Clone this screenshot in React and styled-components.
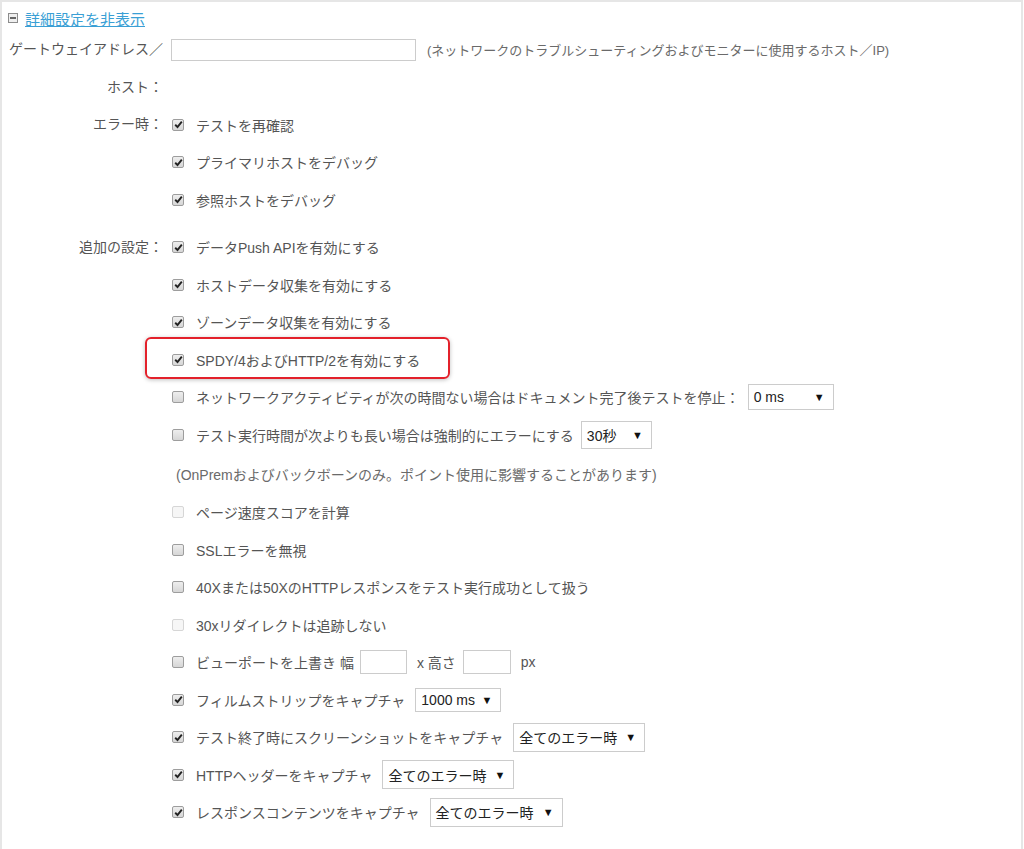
import styled, { createGlobalStyle } from "styled-components";

const GlobalStyle = createGlobalStyle`
  body {
    margin: 0;
    background: #fff;
    font-family: "Liberation Sans", "Noto Sans CJK JP", sans-serif;
  }
`;

const Panel = styled.div`
  box-sizing: border-box;
  width: 1023px;
  min-height: 870px;
  border: 2px solid #e6e6e6;
  border-bottom: none;
  padding: 0 0 0 4px;
`;

const Header = styled.div`
  display: flex;
  align-items: center;
  height: 29px;
  padding: 3px 0 0 2px;
  box-sizing: border-box;
  gap: 7px;
`;

const ToggleIcon = styled.span`
  box-sizing: border-box;
  width: 10px;
  height: 10px;
  border: 1px solid #8c8c8c;
  background: #efefef;
  position: relative;

  &::after {
    content: "";
    position: absolute;
    left: 1px;
    right: 1px;
    top: 3px;
    height: 2px;
    background: #666;
  }
`;

const ToggleLink = styled.a`
  font-size: 15px;
  color: #3a9fd5;
  text-decoration: underline;
  cursor: pointer;
`;

const Group = styled.div`
  display: flex;
  margin-top: ${(p) => (p.$gap ? "10px" : "0")};
`;

const Label = styled.div`
  flex: none;
  width: 157px;
  height: 37.5px;
  line-height: 37.5px;
  text-align: right;
  font-size: 14px;
  color: #555;
  white-space: nowrap;
`;

const Options = styled.div`
  display: flex;
  flex-direction: column;
  margin-left: 9px;
`;

const Row = styled.div`
  position: relative;
  display: flex;
  align-items: center;
  height: ${(p) => (p.$tall ? "40px" : "37.5px")};
  font-size: 14px;
  color: #555;
  white-space: nowrap;
  padding-left: ${(p) => (p.$indent ? "4px" : "0")};
`;

const Text = styled.span`
  margin-left: 12px;
`;

const Hint = styled.span`
  margin-left: 11px;
  font-size: 13px;
  color: #6a6a6a;
`;

const Note = styled.span`
  color: #6a6a6a;
`;

const TextInput = styled.span`
  box-sizing: border-box;
  display: inline-block;
  width: ${(p) => p.$w}px;
  height: ${(p) => p.$h}px;
  border: 1px solid #ccc;
  background: #fff;
  margin: 0 ${(p) => p.$mr || 0}px 0 ${(p) => p.$ml || 0}px;
`;

const Select = styled.span`
  box-sizing: border-box;
  display: inline-flex;
  align-items: center;
  justify-content: space-between;
  width: ${(p) => p.$w}px;
  height: ${(p) => p.$h}px;
  margin-left: ${(p) => p.$ml}px;
  padding: 0 8px 0 5px;
  border: 1px solid #ccc;
  background: #fff;
  color: #222;
  font-size: 14px;
`;

const Arrow = styled.span`
  font-size: 11px;
  color: #111;
`;

const Box = styled.span`
  box-sizing: border-box;
  flex: none;
  display: inline-flex;
  align-items: center;
  justify-content: center;
  width: 12px;
  height: 12px;
  border-radius: 2px;
  border: 1px solid ${(p) => (p.$disabled ? "#d6d6d6" : "#9d9d9d")};
  background: ${(p) =>
    p.$disabled ? "#f6f6f6" : "linear-gradient(#eeeeee, #d6d6d6)"};
`;

const Highlight = styled.div`
  position: absolute;
  box-sizing: border-box;
  left: -27px;
  top: -4px;
  width: 305px;
  height: 42px;
  border: 2px solid #e3212b;
  border-radius: 6px;
  box-shadow: 0 1px 4px rgba(0, 0, 0, 0.25);
  pointer-events: none;
`;

const Check = ({ checked, disabled }) => (
  <Box $disabled={disabled}>
    {checked && (
      <svg width="9" height="9" viewBox="0 0 9 9">
        <path d="M1.2 4.8 L3.5 7 L7.8 1.6" fill="none" stroke="#222" strokeWidth="1.9" />
      </svg>
    )}
  </Box>
);

const Option = ({ checked, disabled, label, children, highlight }) => (
  <Row>
    {highlight && <Highlight />}
    <Check checked={checked} disabled={disabled} />
    <Text>{label}</Text>
    {children}
  </Row>
);

const Dropdown = ({ value, w, h, ml = 8 }) => (
  <Select $w={w} $h={h} $ml={ml}>
    <span>{value}</span>
    <Arrow>▼</Arrow>
  </Select>
);

export default function App() {
  return (
    <>
      <GlobalStyle />
      <Panel>
        <Header>
          <ToggleIcon />
          <ToggleLink>詳細設定を非表示</ToggleLink>
        </Header>

        <Group>
          <Label>ゲートウェイアドレス／</Label>
          <Options>
            <Row>
              <TextInput $w={245} $h={22} $ml={-1} />
              <Hint>(ネットワークのトラブルシューティングおよびモニターに使用するホスト／IP)</Hint>
            </Row>
          </Options>
        </Group>
        <Group>
          <Label>ホスト：</Label>
        </Group>

        <Group>
          <Label>エラー時：</Label>
          <Options>
            <Option checked label="テストを再確認" />
            <Option checked label="プライマリホストをデバッグ" />
            <Option checked label="参照ホストをデバッグ" />
          </Options>
        </Group>

        <Group $gap>
          <Label>追加の設定：</Label>
          <Options>
            <Option checked label="データPush APIを有効にする" />
            <Option checked label="ホストデータ収集を有効にする" />
            <Option checked label="ゾーンデータ収集を有効にする" />
            <Option checked highlight label="SPDY/4およびHTTP/2を有効にする" />
            <Option label="ネットワークアクティビティが次の時間ない場合はドキュメント完了後テストを停止：">
              <Dropdown value="0 ms" w={86} h={26} ml={8} />
            </Option>
            <Option label="テスト実行時間が次よりも長い場合は強制的にエラーにする">
              <Dropdown value="30秒" w={71} h={28} ml={7} />
            </Option>
            <Row $tall $indent>
              <Note>(OnPremおよびバックボーンのみ。ポイント使用に影響することがあります)</Note>
            </Row>
            <Option disabled label="ページ速度スコアを計算" />
            <Option label="SSLエラーを無視" />
            <Option label="40Xまたは50XのHTTPレスポンスをテスト実行成功として扱う" />
            <Option disabled label="30xリダイレクトは追跡しない" />
            <Option label="ビューポートを上書き 幅">
              <TextInput $w={47} $h={24} $ml={6} $mr={10} />
              <span>x 高さ</span>
              <TextInput $w={48} $h={24} $ml={7} $mr={10} />
              <span>px</span>
            </Option>
            <Option checked label="フィルムストリップをキャプチャ">
              <Dropdown value="1000 ms" w={86} h={24} ml={10} />
            </Option>
            <Option checked label="テスト終了時にスクリーンショットをキャプチャ">
              <Dropdown value="全てのエラー時" w={132} h={29} ml={10} />
            </Option>
            <Option checked label="HTTPヘッダーをキャプチャ">
              <Dropdown value="全てのエラー時" w={132} h={29} ml={10} />
            </Option>
            <Option checked label="レスポンスコンテンツをキャプチャ">
              <Dropdown value="全てのエラー時" w={133} h={29} ml={10} />
            </Option>
          </Options>
        </Group>
      </Panel>
    </>
  );
}
